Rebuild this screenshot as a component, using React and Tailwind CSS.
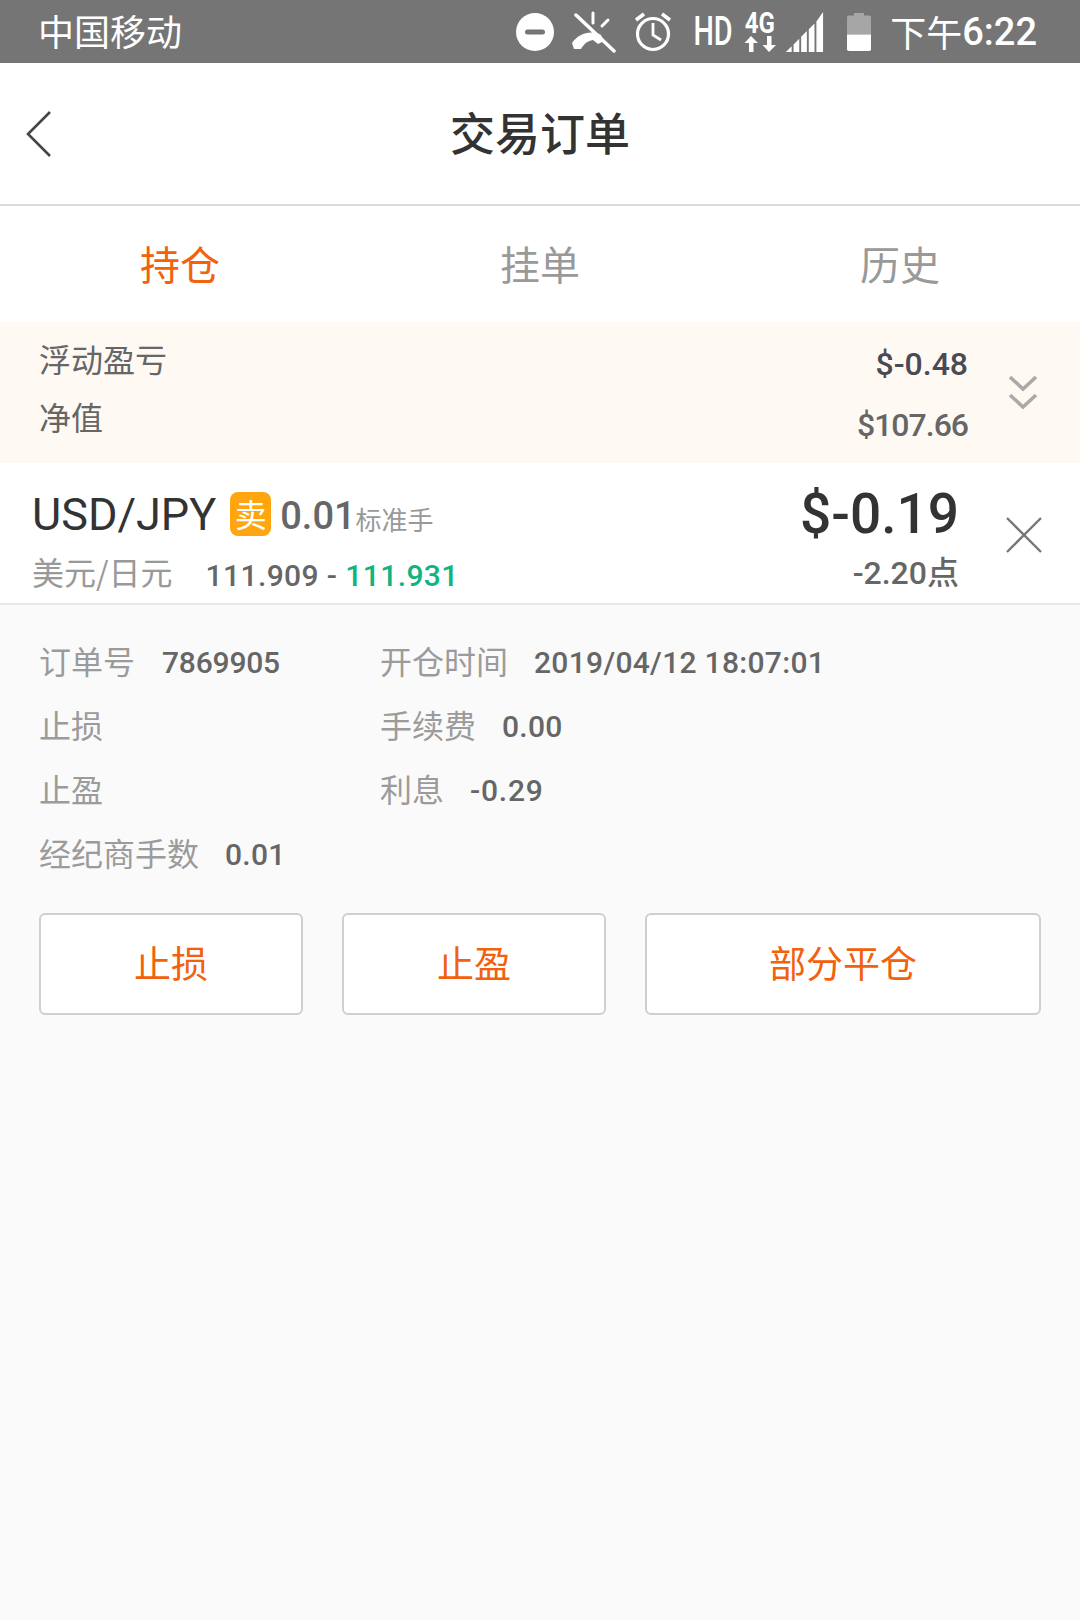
const num = 'font-["Roboto","Noto_Sans_CJK_SC",sans-serif]';

function Row({ label, value, gap, track = 'tracking-[0.3px]' }) {
  return (
    <div className="flex h-16 items-center">
      <span className="pb-[6px] text-[32px] leading-none text-[#9b9b9b]">{label}</span>
      {value && <span className={`${num} ${gap} ${track} text-[30px] leading-none font-medium text-[#666]`}>{value}</span>}
    </div>
  );
}

function Btn({ children, w }) {
  return (
    <button className={`${w} flex h-[102px] items-center justify-center rounded-[6px] border-2 border-[#cfcfcf] bg-white pb-[3px] text-[37px] leading-none text-[#f2610c]`}>
      {children}
    </button>
  );
}

export default function App() {
  return (
    <div className='flex min-h-[1620px] w-[1080px] flex-col bg-[#fafafa] font-["Noto_Sans_CJK_SC",sans-serif]'>
      {/* status bar */}
      <div className="flex h-[63px] items-center bg-[#757575] pr-[43px] pl-[38px] text-white">
        <span className="pb-[4px] text-[36px] leading-none">中国移动</span>
        <div className="ml-auto flex items-center">
          <svg width="38" height="38" viewBox="0 0 38 38">
            <circle cx="19" cy="19" r="19" fill="#fff" />
            <rect x="9" y="16.5" width="20" height="5" rx="2.5" fill="#757575" />
          </svg>
          <svg className="ml-[17px]" width="46" height="42" viewBox="0 0 46 42" fill="none" stroke="#fff" strokeLinecap="round">
            <path d="M5 4 L43 40" strokeWidth="3.5" />
            <path d="M22 2 V12 M37 9 L31 15" strokeWidth="3" />
            <path d="M1 32 C8 22 20 19 30 24 L33 30 L27 33 L22 29 C16 30 13 33 10 38 L3 38 Z" fill="#fff" stroke="none" />
          </svg>
          <svg className="ml-[17px]" width="38" height="42" viewBox="0 0 38 42" fill="none" stroke="#fff" strokeWidth="3.2">
            <circle cx="19" cy="23" r="15.5" />
            <path d="M19 12 V24 L27 29" strokeWidth="2.8" />
            <path d="M2 9 L10 3 M36 9 L28 3" strokeWidth="3.6" />
          </svg>
          <span className='ml-[21px] flex w-[40px] justify-center font-["Roboto",sans-serif] text-[40px] leading-none font-medium [transform:scaleX(0.72)]'>HD</span>
          <div className="ml-[10px] flex w-[33px] flex-col items-center">
            <span className='font-["Roboto",sans-serif] text-[30px] leading-[24px] font-bold [transform:scaleX(0.8)]'>4G</span>
            <svg width="32" height="18" viewBox="0 0 32 18" fill="#fff">
              <path d="M7 1 L14 8 H9.5 V17 H5 V8 H0.5 Z M25 17 L32 10 H27.5 V1 H23 V10 H18.5 Z" />
            </svg>
          </div>
          <svg className="ml-[9px]" width="39" height="40" viewBox="0 0 39 42" fill="#fff">
            <path d="M0 42 L6 36 V42 Z M8 34 L14 28 V42 H8 Z M16 26 L22 20 V42 H16 Z M24 18 L30 12 V42 H24 Z M32 10 L39 0 V42 H32 Z" />
          </svg>
          <svg className="ml-[23px]" width="24" height="38" viewBox="0 0 24 44" preserveAspectRatio="none">
            <path d="M7 0 H17 V3 H22 Q24 3 24 5 V25 H0 V5 Q0 3 2 3 H7 Z" fill="#a6a6a6" />
            <path d="M0 25 H24 V42 Q24 44 22 44 H2 Q0 44 0 42 Z" fill="#fff" />
          </svg>
          <span className='ml-[19px] flex items-center leading-none'>
            <span className="pb-[2px] text-[36px]">下午</span>
            <span className='font-["Roboto",sans-serif] text-[38px] font-medium'>6:22</span>
          </span>
        </div>
      </div>

      {/* nav */}
      <div className="relative flex h-[143px] items-center justify-center border-b-2 border-[#dcdcdc] bg-white">
        <svg className="absolute top-[48px] left-[26px]" width="26" height="46" viewBox="0 0 26 46" fill="none" stroke="#444" strokeWidth="2.6">
          <path d="M24 1 L2 23 L24 45" />
        </svg>
        <span className="pb-[4px] text-[45px] leading-none font-medium text-[#333]">交易订单</span>
      </div>

      {/* tabs */}
      <div className="grid h-[116px] grid-cols-3 bg-white pb-[2px] text-[40px] leading-none text-[#999]">
        <div className="flex items-center justify-center text-[#f2610c]">持仓</div>
        <div className="flex items-center justify-center">挂单</div>
        <div className="flex items-center justify-center">历史</div>
      </div>

      {/* summary */}
      <div className="flex h-[141px] bg-[#fff9f3] pr-[42px] pl-[39px]">
        <div className="flex flex-col pt-[20px] text-[32px] leading-none text-[#666]">
          <span>浮动盈亏</span>
          <span className="mt-[26px]">净值</span>
        </div>
        <div className={`${num} ml-auto flex flex-col items-end pt-[26px] text-[32px] leading-none font-medium`}>
          <span className="text-[#4a4a55]">$-0.48</span>
          <span className="mt-[29px] tracking-[-1px] text-[#666]">$107.66</span>
        </div>
        <svg className="mt-[53px] ml-[40px]" width="30" height="36" viewBox="0 0 30 36" fill="none" stroke="#aaa" strokeWidth="3.6">
          <path d="M2 2 L15 14 L28 2 M2 20 L15 32 L28 20" />
        </svg>
      </div>

      {/* order row */}
      <div className="flex h-[142px] border-b-2 border-[#e8e8e8] bg-white pr-[38px] pl-[32px]">
        <div className="flex flex-col">
          <div className="mt-[28px] flex h-[46px] items-center">
            <span className='font-["Roboto",sans-serif] text-[45px] leading-none text-[#333]'>USD/JPY</span>
            <span className="ml-[14px] flex h-[44px] w-[41px] items-center justify-center rounded-[8px] bg-[#ffa50f] pb-[3px] text-[32px] leading-none text-white">卖</span>
            <span className={`${num} mt-[4px] ml-[9px] text-[38px] leading-none font-medium text-[#666]`}>0.01</span>
            <span className="mt-[9px] text-[26px] leading-none text-[#999]">标准手</span>
          </div>
          <div className="mt-[14px] flex items-center leading-none">
            <span className="text-[32px] text-[#999]">美元/日元</span>
            <span className={`${num} mt-[10px] ml-[33px] text-[30px] font-medium tracking-[0.4px] text-[#666]`}>111.909 - <span className="text-[#12b47e]">111.931</span></span>
          </div>
        </div>
        <div className="ml-auto flex flex-col items-end pt-[24px]">
          <span className={`${num} text-[55px] leading-none font-medium text-[#333]`}>$-0.19</span>
          <span className={`${num} mt-[15px] text-[32px] leading-none font-medium text-[#666]`}>-2.20点</span>
        </div>
        <svg className="mt-[54px] ml-[47px]" width="36" height="36" viewBox="0 0 36 36" fill="none" stroke="#777" strokeWidth="2.4">
          <path d="M1 1 L35 35 M35 1 L1 35" />
        </svg>
      </div>

      {/* details */}
      <div className="px-[39px] pt-[26px]">
        <div className="flex">
          <div className="flex w-[341px] flex-col">
            <Row label="订单号" value="7869905" gap="ml-[27px]" track="tracking-[-0.2px]" />
            <Row label="止损" />
            <Row label="止盈" />
            <Row label="经纪商手数" value="0.01" gap="ml-[26px]" />
          </div>
          <div className="flex flex-col">
            <Row label="开仓时间" value="2019/04/12 18:07:01" gap="ml-[26px]" />
            <Row label="手续费" value="0.00" gap="ml-[26px]" />
            <Row label="利息" value="-0.29" gap="ml-[26px]" track="tracking-[0.8px]" />
          </div>
        </div>
        <div className="mt-[26px] flex gap-[39px]">
          <Btn w="w-[264px]">止损</Btn>
          <Btn w="w-[264px]">止盈</Btn>
          <Btn w="w-[396px]">部分平仓</Btn>
        </div>
      </div>
    </div>
  );
}
